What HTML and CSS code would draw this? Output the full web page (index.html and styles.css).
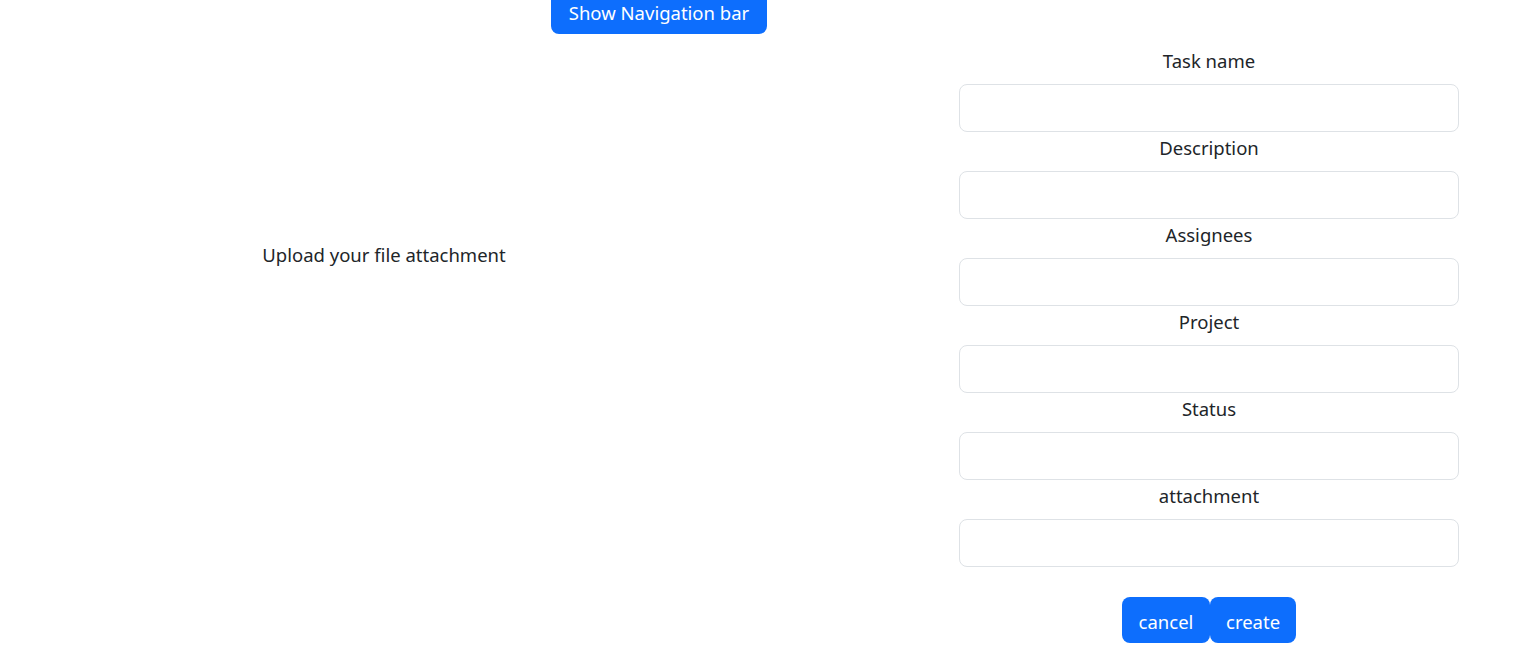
FILE: index.html
```html
<!DOCTYPE html>
<html lang="en">
<head>
<meta charset="utf-8">
<title>Create task</title>
<link rel="stylesheet" href="styles.css">
</head>
<body>
<div class="topbar">
  <button class="btn btn-nav" type="button">Show Navigation bar</button>
</div>
<div class="main">
  <div class="upload">
    <p class="upload-text">Upload your file attachment</p>
  </div>
  <form class="task-form">
    <label class="form-label" for="name">Task name</label>
    <input class="form-control" id="name" type="text">
    <label class="form-label" for="desc">Description</label>
    <input class="form-control" id="desc" type="text">
    <label class="form-label" for="assg">Assignees</label>
    <input class="form-control" id="assg" type="text">
    <label class="form-label" for="proj">Project</label>
    <input class="form-control" id="proj" type="text">
    <label class="form-label" for="stat">Status</label>
    <input class="form-control" id="stat" type="text">
    <label class="form-label" for="att">attachment</label>
    <input class="form-control" id="att" type="text">
    <div class="actions">
      <button class="btn" type="button">cancel</button>
      <button class="btn" type="submit">create</button>
    </div>
  </form>
</div>
</body>
</html>
```
FILE: styles.css
```css
html, body {
  margin: 0;
  padding: 0;
  background: #fff;
}
body {
  font-family: "Noto Sans", "Open Sans", sans-serif;
  font-size: 18.5px;
  color: #212529;
  overflow: hidden;
}
.btn {
  font-family: inherit;
  font-size: 18.5px;
  line-height: 30px;
  height: 46px;
  padding: 3px 16px 0;
  background: #0d6efd;
  color: #fff;
  border: none;
  border-radius: 8px;
  cursor: pointer;
}
.topbar {
  display: flex;
  align-items: flex-end;
  padding-left: 551px;
  height: 34px;
  overflow: visible;
}
.btn-nav {
  width: 216px;
  height: 48px;
  flex: none;
  padding-top: 6px;
  padding-bottom: 0;
}
.main {
  display: flex;
}
.upload {
  width: 768px;
  display: flex;
  justify-content: center;
  padding-top: 206px;
}
.upload-text {
  margin: 0;
  line-height: 30px;
}
.task-form {
  margin-left: 191px;
  width: 500px;
  padding-top: 12px;
  display: flex;
  flex-direction: column;
}
.form-label {
  display: block;
  text-align: center;
  line-height: 30px;
  margin-bottom: 8px;
}
.form-control {
  box-sizing: border-box;
  width: 500px;
  height: 48px;
  border: 1px solid #dee2e6;
  border-radius: 8px;
  padding: 8px 16px;
  font-family: inherit;
  font-size: 18.5px;
  margin: 0 0 1px;
  outline: none;
}
.actions {
  display: flex;
  justify-content: center;
  margin-top: 29px;
}
.actions .btn {
  width: 88px;
}
.actions .btn + .btn {
  width: 86px;
}
```
